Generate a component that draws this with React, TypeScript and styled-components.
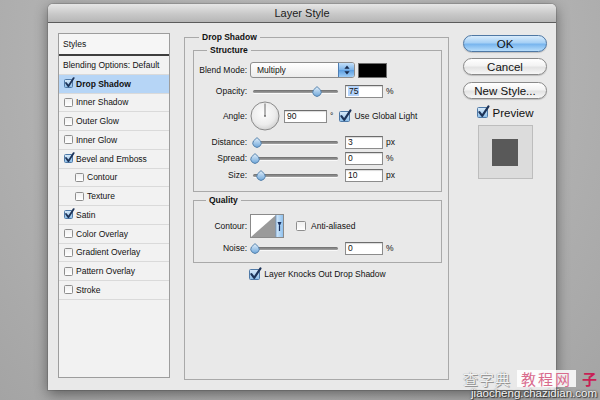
import React from "react";
import styled, { createGlobalStyle } from "styled-components";

const Global = createGlobalStyle`
  html, body { margin: 0; padding: 0; }
  body {
    width: 600px; height: 400px; overflow: hidden;
    font-family: "Liberation Sans", Arial, sans-serif;
    color: #111;
  }
`;

const Desktop = styled.div`
  position: relative;
  width: 600px;
  height: 400px;
  overflow: hidden;
  box-sizing: border-box;
  padding: 4px 0 0 48px;
  background: radial-gradient(ellipse at 50% 15%, #c4c4c4 0%, #b3b3b3 55%, #a4a4a4 100%);
`;

const Window = styled.div`
  width: 508px;
  height: 386px;
  background: #e9e9e9;
  border-radius: 5px 5px 0 0;
  box-shadow: 0 4px 14px rgba(0, 0, 0, 0.45), 0 0 0 1px rgba(0, 0, 0, 0.12);
  display: flex;
  flex-direction: column;
`;

const TitleBar = styled.div`
  flex: none;
  height: 18px;
  border-radius: 5px 5px 0 0;
  border-bottom: 1px solid #5c5c5c;
  background: linear-gradient(#e6e6e6, #c9c9c9 55%, #b6b6b6);
  display: flex;
  align-items: center;
  justify-content: center;
  font-size: 11px;
  color: #1c1c1c;
`;

const Body = styled.div`
  flex: 1;
  display: flex;
  align-items: flex-start;
  gap: 14px;
  padding: 10px 9px 0 10px;
`;

/* ---------- Styles list ---------- */

const StylesPanel = styled.div`
  flex: none;
  width: 112px;
  height: 345px;
  box-sizing: border-box;
  border: 1px solid #9d9d9d;
  background: #f2f2f2;
  display: flex;
  flex-direction: column;
`;

const StylesHeader = styled.div`
  height: 22px;
  flex: none;
  box-sizing: border-box;
  border-bottom: 2px solid #3e3e3e;
  display: flex;
  align-items: center;
  padding-left: 4px;
  font-size: 8.5px;
  background: #f6f6f6;
`;

const ListRow = styled.div<{ $indent: number; $selected?: boolean }>`
  height: 18.75px;
  flex: none;
  box-sizing: border-box;
  border-bottom: 1px solid #dadada;
  display: flex;
  align-items: center;
  gap: 3px;
  padding-left: ${(p) => p.$indent}px;
  font-size: 8.5px;
  font-weight: ${(p) => (p.$selected ? "bold" : "normal")};
  background: ${(p) => (p.$selected ? "#b6d5f6" : "transparent")};
  white-space: nowrap;
`;

/* ---------- Checkbox ---------- */

const Box = styled.span<{ $size: number; $checked: boolean }>`
  flex: none;
  position: relative;
  width: ${(p) => p.$size}px;
  height: ${(p) => p.$size}px;
  box-sizing: border-box;
  border-radius: 1.5px;
  border: 1px solid ${(p) => (p.$checked ? "#4f7aa8" : "#8e8e8e")};
  background: ${(p) =>
    p.$checked
      ? "linear-gradient(#d6e9f9, #8fc0ea)"
      : "linear-gradient(#f0f0f0, #ffffff)"};
  display: inline-block;
`;

const CheckMark = styled.svg`
  position: absolute;
  left: -1px;
  top: -3px;
  overflow: visible;
`;

function Check({ size, checked }: { size: number; checked: boolean }) {
  return (
    <Box $size={size} $checked={checked}>
      {checked && (
        <CheckMark width={size + 2} height={size + 2} viewBox="0 0 12 12">
          <path
            d="M2.2 6.6 L4.8 10 L10.6 1.2"
            fill="none"
            stroke="#1d3358"
            strokeWidth="2"
            strokeLinecap="round"
            strokeLinejoin="round"
          />
        </CheckMark>
      )}
    </Box>
  );
}

/* ---------- Group boxes ---------- */

const Group = styled.fieldset<{ $pad: string; $h?: number; $mt?: number }>`
  margin: ${(p) => p.$mt ?? 0}px 0 0 0;
  min-width: 0;
  box-sizing: border-box;
  border: 1px solid #a9a9a9;
  padding: ${(p) => p.$pad};
  ${(p) => (p.$h ? `height: ${p.$h}px;` : "")}
  display: flex;
  flex-direction: column;
`;

const MainGroup = styled(Group)`
  flex: none;
  width: 265px;
  margin-top: -1px;
`;

const Legend = styled.legend<{ $ml: number }>`
  margin-left: ${(p) => p.$ml}px;
  padding: 0 3px;
  font-size: 8.5px;
  font-weight: bold;
  line-height: 10px;
  color: #111;
`;

const Row = styled.div<{ $h: number; $mt?: number; $center?: boolean }>`
  display: flex;
  align-items: center;
  height: ${(p) => p.$h}px;
  margin-top: ${(p) => p.$mt ?? 0}px;
  justify-content: ${(p) => (p.$center ? "center" : "flex-start")};
  font-size: 8.5px;
  white-space: nowrap;
`;

const Label = styled.span`
  flex: none;
  width: 49px;
  text-align: right;
  font-size: 8.5px;
`;

const Text = styled.span<{ $ml?: number }>`
  margin-left: ${(p) => p.$ml ?? 0}px;
  font-size: 8.5px;
`;

const Select = styled.div`
  margin-left: 3px;
  width: 105px;
  height: 16px;
  box-sizing: border-box;
  border: 1px solid #8d8d8d;
  border-radius: 3px;
  background: linear-gradient(#ffffff, #ececec);
  display: flex;
  align-items: stretch;
  overflow: hidden;
`;

const SelectText = styled.span`
  flex: 1;
  display: flex;
  align-items: center;
  padding-left: 6px;
  font-size: 8.5px;
`;

const Stepper = styled.span`
  width: 15px;
  border-left: 1px solid #4c7db3;
  background: linear-gradient(#c4e0fa, #7bb3e9 50%, #5a9de0 51%, #9fcdf6);
  display: flex;
  align-items: center;
  justify-content: center;
`;

const Swatch = styled.div`
  margin-left: 3px;
  width: 29px;
  height: 15px;
  box-sizing: border-box;
  border: 1px solid #6f6f6f;
  background: #000;
`;

const NumInput = styled.div<{ $w: number; $ml: number }>`
  flex: none;
  margin-left: ${(p) => p.$ml}px;
  width: ${(p) => p.$w}px;
  height: 13px;
  box-sizing: border-box;
  border: 1px solid #8c8c8c;
  border-top-color: #6c6c6c;
  background: #fff;
  box-shadow: inset 0 1px 1px rgba(0, 0, 0, 0.15);
  display: flex;
  align-items: center;
  padding-left: 2px;
  font-size: 8.5px;
`;

const Selected = styled.span`
  background: #b4d4fc;
  padding: 0 1px;
`;

/* ---------- Slider ---------- */

const SliderWrap = styled.div`
  flex: none;
  position: relative;
  margin-left: 6px;
  width: 85px;
  height: 11px;
  display: flex;
  align-items: center;
`;

const Track = styled.div`
  width: 100%;
  height: 3px;
  border-radius: 2px;
  background: linear-gradient(#6e6e6e, #a3a3a3);
  box-shadow: 0 1px 0 rgba(255, 255, 255, 0.7);
`;

const Thumb = styled.svg`
  position: absolute;
  top: 0;
  margin-left: -5px;
`;

function Slider({ pos }: { pos: number }) {
  return (
    <SliderWrap>
      <Track />
      <Thumb width="10" height="11" viewBox="0 0 10 11" style={{ left: `${pos}px` }}>
        <defs>
          <linearGradient id="thumbg" x1="0" y1="0" x2="0" y2="1">
            <stop offset="0" stopColor="#e4f1fc" />
            <stop offset="1" stopColor="#6ea6d9" />
          </linearGradient>
        </defs>
        <path
          d="M5 0.6 L8.6 4 A4.2 4.2 0 1 1 1.4 4 Z"
          fill="url(#thumbg)"
          stroke="#4b79a6"
          strokeWidth="0.9"
        />
      </Thumb>
    </SliderWrap>
  );
}

/* ---------- Dial & contour ---------- */

const DialSvg = styled.svg`
  flex: none;
  margin-left: 3px;
`;

function Dial() {
  return (
    <DialSvg width="30" height="30" viewBox="0 0 30 30">
      <defs>
        <radialGradient id="dialg" cx="0.45" cy="0.4" r="0.6">
          <stop offset="0" stopColor="#fdfdfd" />
          <stop offset="0.7" stopColor="#ececec" />
          <stop offset="1" stopColor="#d2d2d2" />
        </radialGradient>
      </defs>
      <circle cx="15" cy="15" r="14" fill="url(#dialg)" stroke="#8a8a8a" strokeWidth="1" />
      <line x1="15" y1="15" x2="15" y2="2.5" stroke="#6a6a6a" strokeWidth="1" />
      <circle cx="15" cy="15" r="0.9" fill="#6a6a6a" />
    </DialSvg>
  );
}

const ContourSvg = styled.svg`
  flex: none;
  margin-left: 3px;
`;

function Contour() {
  return (
    <ContourSvg width="34" height="24" viewBox="0 0 34 24">
      <defs>
        <linearGradient id="contg" x1="0" y1="0" x2="1" y2="0">
          <stop offset="0" stopColor="#d6eafb" />
          <stop offset="1" stopColor="#8fc1ee" />
        </linearGradient>
      </defs>
      <rect x="0.5" y="0.5" width="33" height="23" fill="#fff" stroke="#8a8a8a" />
      <polygon points="1,23 26,1 26,23" fill="#9a9a9a" />
      <rect x="26" y="1" width="7" height="22" fill="url(#contg)" />
      <line x1="26" y1="1" x2="26" y2="23" stroke="#6d98c4" strokeWidth="0.8" />
      <polygon points="27.5,8 31.5,8 29.5,12.5" fill="#1b3260" />
      <line x1="29.5" y1="12" x2="29.5" y2="17" stroke="#1b3260" strokeWidth="1.2" />
    </ContourSvg>
  );
}

/* ---------- Right column ---------- */

const RightCol = styled.div`
  flex: none;
  width: 84px;
  display: flex;
  flex-direction: column;
  align-items: stretch;
  padding-top: 2px;
`;

const Button = styled.div<{ $primary?: boolean; $mt?: number }>`
  height: 17px;
  margin-top: ${(p) => p.$mt ?? 0}px;
  box-sizing: border-box;
  border-radius: 9px;
  border: 1px solid ${(p) => (p.$primary ? "#4f78a4" : "#8a8a8a")};
  background: ${(p) =>
    p.$primary
      ? "linear-gradient(#d9ecfc 0%, #a6d0f5 45%, #78b5ee 55%, #b7ddfb 100%)"
      : "linear-gradient(#ffffff 0%, #f3f3f3 45%, #e3e3e3 55%, #f7f7f7 100%)"};
  box-shadow: 0 1px 1px rgba(0, 0, 0, 0.18);
  display: flex;
  align-items: center;
  justify-content: center;
  font-size: 11.5px;
  color: #111;
`;

const PreviewRow = styled.div`
  display: flex;
  align-items: center;
  justify-content: center;
  gap: 5px;
  height: 13px;
  margin-top: 7px;
  font-size: 11.5px;
`;

const PreviewBox = styled.div`
  align-self: center;
  margin-top: 6px;
  width: 55px;
  height: 54px;
  box-sizing: border-box;
  border: 1px solid #bdbdbd;
  background: #dcdcdc;
  display: flex;
  align-items: center;
  justify-content: center;
`;

const PreviewSquare = styled.div`
  width: 26px;
  height: 27px;
  background: #595959;
`;

/* ---------- Watermark ---------- */

const Watermark = styled.div`
  position: absolute;
  right: 3px;
  bottom: 1px;
  display: flex;
  flex-direction: column;
  align-items: flex-end;
  pointer-events: none;
`;

const WmTop = styled.div`
  display: flex;
  align-items: center;
  gap: 6px;
  font-family: "Noto Sans CJK SC", sans-serif;
  font-size: 15px;
  line-height: 17px;
`;

const WmGray = styled.span`
  color: #f2f2f2;
  text-shadow: 0 0 1px #7a7a7a, 1px 1px 0 #9a9a9a;
  letter-spacing: 1px;
`;

const WmBadge = styled.span`
  background: rgba(255, 255, 255, 0.85);
  color: #d96b8d;
  padding: 0 4px;
  letter-spacing: 2px;
`;

const WmPink = styled.span`
  color: #c81f55;
  font-weight: bold;
`;

const WmUrl = styled.div`
  font-family: "Liberation Sans", Arial, sans-serif;
  font-size: 11.5px;
  line-height: 12px;
  color: #f4f4f4;
  text-shadow: 0 0 2px #222, 1px 1px 1px #333;
`;

const listItems: { name: string; checked: boolean; indent: number; selected?: boolean }[] = [
  { name: "Drop Shadow", checked: true, indent: 5, selected: true },
  { name: "Inner Shadow", checked: false, indent: 5 },
  { name: "Outer Glow", checked: false, indent: 5 },
  { name: "Inner Glow", checked: false, indent: 5 },
  { name: "Bevel and Emboss", checked: true, indent: 5 },
  { name: "Contour", checked: false, indent: 16 },
  { name: "Texture", checked: false, indent: 16 },
  { name: "Satin", checked: true, indent: 5 },
  { name: "Color Overlay", checked: false, indent: 5 },
  { name: "Gradient Overlay", checked: false, indent: 5 },
  { name: "Pattern Overlay", checked: false, indent: 5 },
  { name: "Stroke", checked: false, indent: 5 },
];

export default function App() {
  return (
    <>
      <Global />
      <Desktop>
        <Window>
          <TitleBar>Layer Style</TitleBar>
          <Body>
            <StylesPanel>
              <StylesHeader>Styles</StylesHeader>
              <ListRow $indent={4}>Blending Options: Default</ListRow>
              {listItems.map((it) => (
                <ListRow key={it.name} $indent={it.indent} $selected={it.selected}>
                  <Check size={9} checked={it.checked} />
                  <span>{it.name}</span>
                </ListRow>
              ))}
            </StylesPanel>

            <MainGroup $pad="3px 6px 0 8px" $h={348}>
              <Legend $ml={6}>Drop Shadow</Legend>

              <Group $pad="7px 4px 8px 4px">
                <Legend $ml={9}>Structure</Legend>
                <Row $h={16}>
                  <Label>Blend Mode:</Label>
                  <Select>
                    <SelectText>Multiply</SelectText>
                    <Stepper>
                      <svg width="6" height="10" viewBox="0 0 6 10">
                        <polygon points="3,0.5 5.6,3.8 0.4,3.8" fill="#17294a" />
                        <polygon points="3,9.5 5.6,6.2 0.4,6.2" fill="#17294a" />
                      </svg>
                    </Stepper>
                  </Select>
                  <Swatch />
                </Row>
                <Row $h={14} $mt={6}>
                  <Label>Opacity:</Label>
                  <Slider pos={64} />
                  <NumInput $w={38} $ml={7}>
                    <Selected>75</Selected>
                  </NumInput>
                  <Text $ml={3}>%</Text>
                </Row>
                <Row $h={30} $mt={3}>
                  <Label>Angle:</Label>
                  <Dial />
                  <NumInput $w={43} $ml={4}>
                    90
                  </NumInput>
                  <Text $ml={3}>°</Text>
                  <Row $h={13} style={{ marginLeft: 6 }}>
                    <Check size={11} checked />
                    <Text $ml={4}>Use Global Light</Text>
                  </Row>
                </Row>
                <Row $h={16} $mt={3}>
                  <Label>Distance:</Label>
                  <Slider pos={4} />
                  <NumInput $w={38} $ml={7}>
                    3
                  </NumInput>
                  <Text $ml={3}>px</Text>
                </Row>
                <Row $h={16}>
                  <Label>Spread:</Label>
                  <Slider pos={2} />
                  <NumInput $w={38} $ml={7}>
                    0
                  </NumInput>
                  <Text $ml={3}>%</Text>
                </Row>
                <Row $h={16} $mt={1}>
                  <Label>Size:</Label>
                  <Slider pos={8} />
                  <NumInput $w={38} $ml={7}>
                    10
                  </NumInput>
                  <Text $ml={3}>px</Text>
                </Row>
              </Group>

              <Group $pad="9px 4px 8px 4px" $mt={3}>
                <Legend $ml={8}>Quality</Legend>
                <Row $h={24}>
                  <Label>Contour:</Label>
                  <Contour />
                  <Row $h={12} style={{ marginLeft: 12 }}>
                    <Check size={10} checked={false} />
                    <Text $ml={5}>Anti-aliased</Text>
                  </Row>
                </Row>
                <Row $h={12} $mt={4}>
                  <Label>Noise:</Label>
                  <Slider pos={2} />
                  <NumInput $w={38} $ml={7}>
                    0
                  </NumInput>
                  <Text $ml={3}>%</Text>
                </Row>
              </Group>

              <Row $h={12} $mt={5} $center>
                <Check size={11} checked />
                <Text $ml={4}>Layer Knocks Out Drop Shadow</Text>
              </Row>
            </MainGroup>

            <RightCol>
              <Button $primary>OK</Button>
              <Button $mt={6}>Cancel</Button>
              <Button $mt={7}>New Style...</Button>
              <PreviewRow>
                <Check size={11} checked />
                <span>Preview</span>
              </PreviewRow>
              <PreviewBox>
                <PreviewSquare />
              </PreviewBox>
            </RightCol>
          </Body>
        </Window>

        <Watermark>
          <WmTop>
            <WmGray>查字典</WmGray>
            <WmBadge>教程网</WmBadge>
            <WmPink>子</WmPink>
          </WmTop>
          <WmUrl>jiaocheng.chazidian.com</WmUrl>
        </Watermark>
      </Desktop>
    </>
  );
}
